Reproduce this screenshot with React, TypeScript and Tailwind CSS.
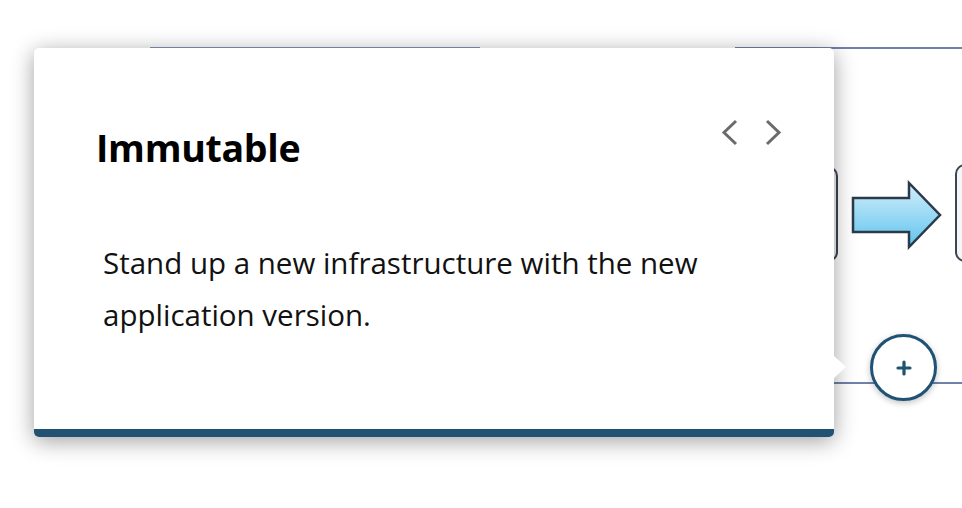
function Diagram() {
  return (
    <div className="absolute inset-0">
      {/* connector lines */}
      <div className="absolute left-[150px] top-[47px] w-[330px] h-[2px] bg-[#8596b8]" />
      <div className="absolute left-[735px] top-[47px] w-[227px] h-[2px] bg-[#6f82a8]" />
      <div className="absolute left-[833px] top-[382px] w-[129px] h-[2px] bg-[#6f82a8]" />

      {/* stage boxes */}
      <div className="absolute left-[700px] top-[166px] w-[138px] h-[96px] rounded-[10px] border-[2px] border-[#3b4652] bg-[#f4f6f8]" />
      <div className="absolute left-[955px] top-[164px] w-[120px] h-[98px] rounded-[10px] border-[2px] border-[#3b4652] bg-[#f4f6f8]" />

      {/* arrow */}
      <svg className="absolute left-[850px] top-[180px]" width="94" height="70" viewBox="0 0 94 70">
        <defs>
          <linearGradient id="arrowFill" x1="0" y1="0" x2="0" y2="1">
            <stop offset="0" stopColor="#d4effb" />
            <stop offset="1" stopColor="#5fc3ee" />
          </linearGradient>
        </defs>
        <path
          d="M3 18 H59 V3 L90 35 L59 67 V52 H3 Z"
          fill="url(#arrowFill)"
          stroke="#2a3a48"
          strokeWidth="2.5"
        />
      </svg>

      {/* add button */}
      <div className="absolute left-[870px] top-[334px] w-[67px] h-[67px] rounded-full border-[3px] border-[#1f5274] bg-white shadow-[0_2px_6px_rgba(0,0,0,0.25)] flex items-center justify-center">
        <svg width="18" height="18" viewBox="0 0 18 18">
          <path d="M9 3 V15 M3 9 H15" stroke="#1f5274" strokeWidth="3.2" strokeLinecap="round" />
        </svg>
      </div>
    </div>
  )
}

function Chevron({ dir }: { dir: 'left' | 'right' }) {
  return (
    <svg width="18" height="27" viewBox="0 0 18 27">
      <polyline
        points={dir === 'left' ? '15,2 3,13.5 15,25' : '3,2 15,13.5 3,25'}
        fill="none"
        stroke="#6b6b6b"
        strokeWidth="3"
      />
    </svg>
  )
}

export default function App() {
  return (
    <main className="relative w-[962px] h-[508px] overflow-hidden bg-white font-['Open_Sans',sans-serif]">
      <Diagram />

      {/* popover */}
      <div className="absolute left-[34px] top-[48px] w-[800px] h-[389px] rounded-[5px] bg-white shadow-[0_4px_22px_rgba(0,0,0,0.38)] flex flex-col">
        <div className="flex-1 flex flex-col pl-[62px] pr-[52px] pt-[77px]">
          <div className="flex items-start justify-between">
            <h2 className="text-[37.5px] leading-[46px] font-bold text-black tracking-[-0.3px]">Immutable</h2>
            <div className="flex items-center gap-[25px] -mt-[6px]">
              <Chevron dir="left" />
              <Chevron dir="right" />
            </div>
          </div>
          <p className="mt-[66px] pl-[7px] text-[29.5px] leading-[52px] text-[#111] max-w-[660px]">
            Stand up a new infrastructure with the new application version.
          </p>
        </div>
        <div className="h-[8px] bg-[#215274] rounded-b-[5px]" />

        {/* pointer */}
        <div className="absolute left-[799px] top-[307px] w-0 h-0 border-y-[12px] border-y-transparent border-l-[13px] border-l-white" />
      </div>
    </main>
  )
}
